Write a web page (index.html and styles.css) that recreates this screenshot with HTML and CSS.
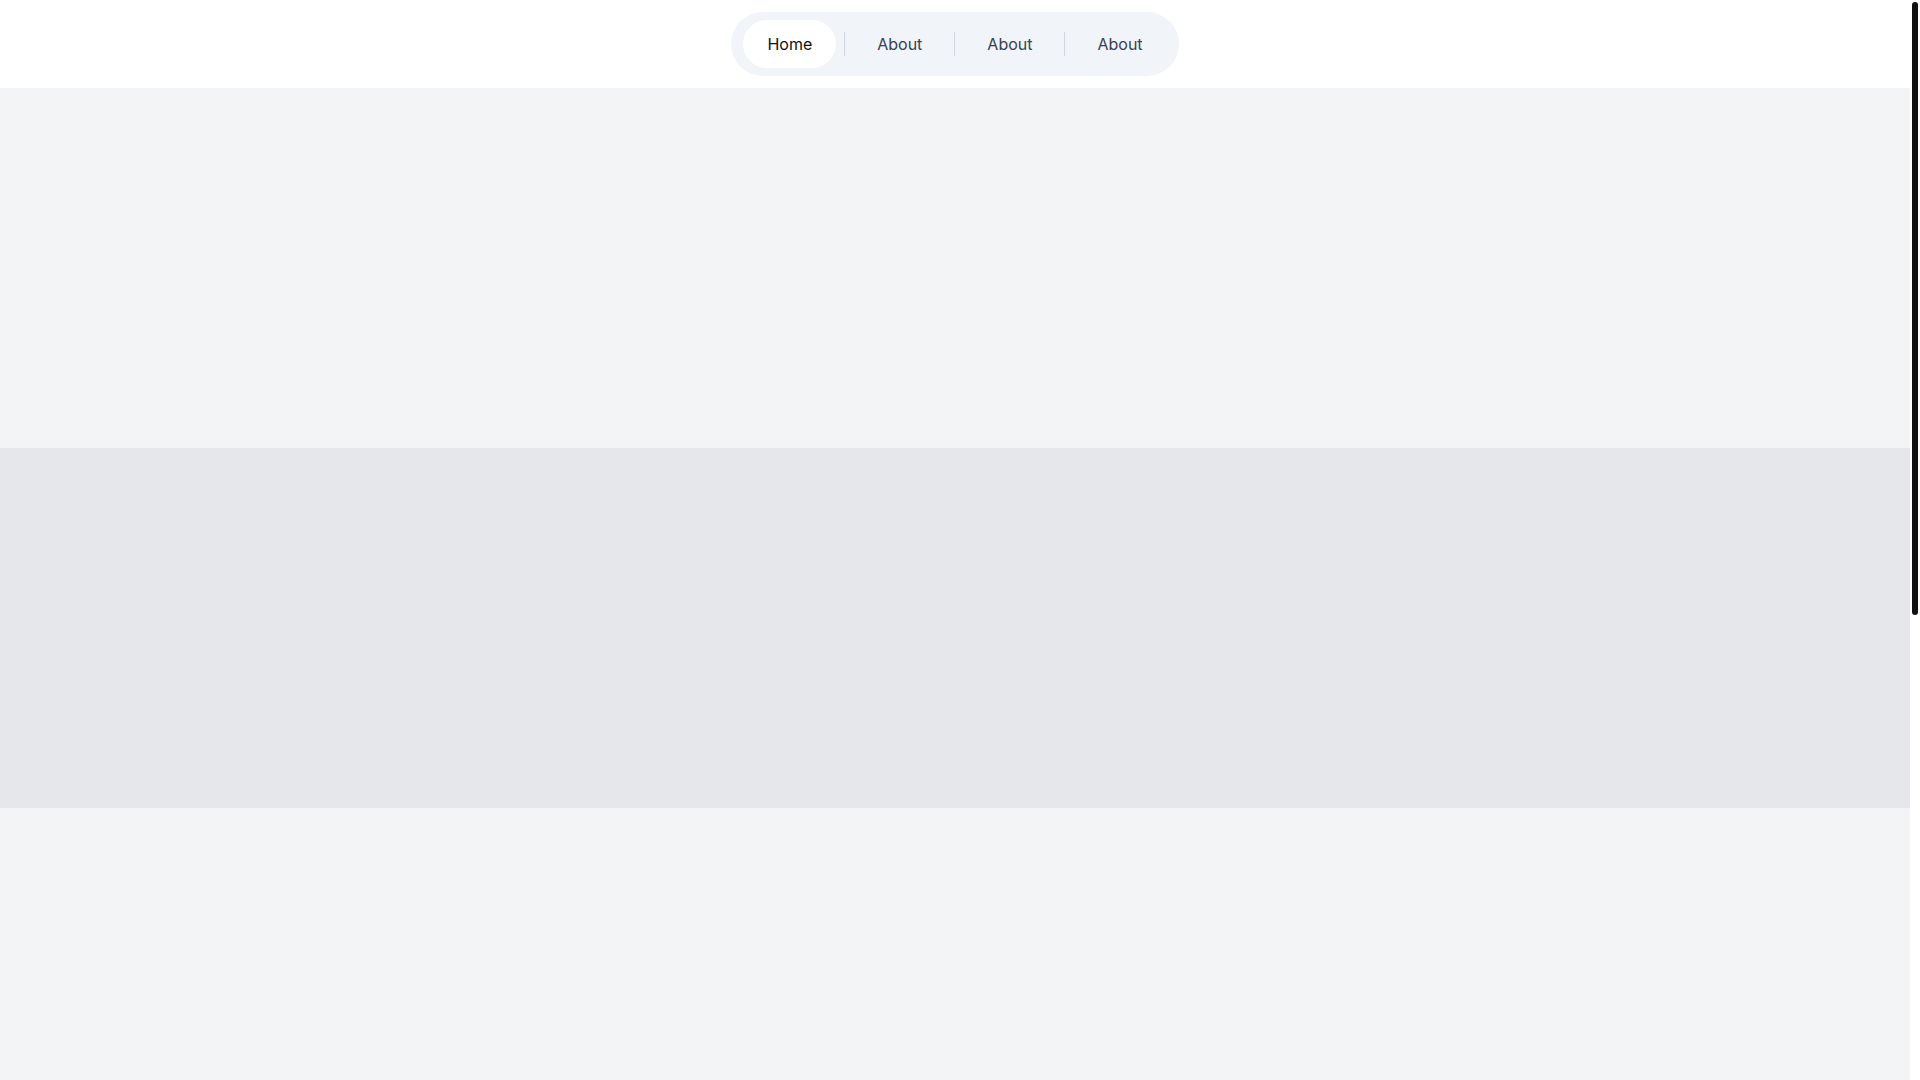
FILE: index.html
```html
<!DOCTYPE html>
<html lang="en">
<head>
<meta charset="utf-8">
<title>Nav</title>
<link rel="stylesheet" href="styles.css">
</head>
<body>
<div class="viewport">
  <div class="page">
    <header class="topbar">
      <nav class="pill-nav">
        <a class="nav-item active" href="#">Home</a>
        <span class="sep"></span>
        <a class="nav-item" href="#">About</a>
        <span class="sep"></span>
        <a class="nav-item" href="#">About</a>
        <span class="sep"></span>
        <a class="nav-item" href="#">About</a>
      </nav>
    </header>
    <main>
      <section class="band light"></section>
      <section class="band dark"></section>
      <section class="band light"></section>
      <section class="band dark"></section>
      <section class="band light"></section>
    </main>
  </div>
  <div class="scrollbar">
    <div class="thumb"></div>
  </div>
</div>
</body>
</html>
```

FILE: styles.css
```css
html, body {
  margin: 0;
  height: 100%;
  overflow: hidden;
}
body {
  font-family: Inter, "Noto Sans", sans-serif;
  background: #ffffff;
}
.viewport {
  display: flex;
  height: 100vh;
}
.page {
  flex: 1;
  min-width: 0;
  overflow: hidden;
}
.scrollbar {
  width: 10px;
  flex: 0 0 10px;
  background: #ffffff;
  padding: 2px 2px 0 2px;
  box-sizing: border-box;
}
.thumb {
  height: 613px;
  background: #111111;
  border-radius: 3px;
}
.topbar {
  height: 88px;
  background: #ffffff;
  display: flex;
  align-items: center;
  justify-content: center;
}
.pill-nav {
  display: flex;
  align-items: center;
  background: #f1f4f9;
  border-radius: 32px;
  padding: 8px 12px;
  height: 48px;
}
.nav-item {
  display: flex;
  align-items: center;
  justify-content: center;
  height: 48px;
  padding: 0 24px;
  border-radius: 24px;
  font-size: 16px;
  color: #374151;
  text-decoration: none;
}
.nav-item.active {
  background: #ffffff;
  color: #111111;
}
.sep {
  width: 1px;
  height: 24px;
  background: #d1d5db;
  margin: 0 8px;
}
.band {
  height: 360px;
}
.band.light {
  background: #f3f4f6;
}
.band.dark {
  background: #e5e7eb;
}
```
